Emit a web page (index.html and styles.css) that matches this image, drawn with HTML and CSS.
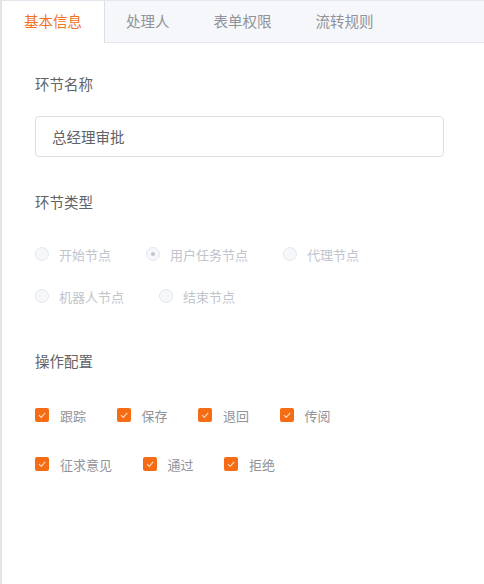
FILE: index.html
```html
<!DOCTYPE html>
<html lang="zh-CN">
<head>
    <meta charset="UTF-8">
    <title>环节配置</title>
    <link rel="stylesheet" href="styles.css">
</head>
<body>
    <div class="panel">
        <div class="tabs">
            <div class="tab active">基本信息</div>
            <div class="tab">处理人</div>
            <div class="tab">表单权限</div>
            <div class="tab">流转规则</div>
        </div>

        <div class="content">
            <div class="title">环节名称</div>
            <input class="text-input" type="text" value="总经理审批">

            <div class="title title-type">环节类型</div>
            <div class="radio-group">
                <label class="radio"><span class="radio-dot"></span>开始节点</label>
                <label class="radio"><span class="radio-dot checked"></span>用户任务节点</label>
                <label class="radio"><span class="radio-dot"></span>代理节点</label>
                <label class="radio"><span class="radio-dot"></span>机器人节点</label>
                <label class="radio"><span class="radio-dot"></span>结束节点</label>
            </div>

            <div class="title title-ops">操作配置</div>
            <div class="check-row">
                <label class="check"><span class="check-box"><svg viewBox="0 0 14 14"><polyline points="4,7.2 6.2,9.4 10.2,4.8"/></svg></span>跟踪</label>
                <label class="check"><span class="check-box"><svg viewBox="0 0 14 14"><polyline points="4,7.2 6.2,9.4 10.2,4.8"/></svg></span>保存</label>
                <label class="check"><span class="check-box"><svg viewBox="0 0 14 14"><polyline points="4,7.2 6.2,9.4 10.2,4.8"/></svg></span>退回</label>
                <label class="check"><span class="check-box"><svg viewBox="0 0 14 14"><polyline points="4,7.2 6.2,9.4 10.2,4.8"/></svg></span>传阅</label>
            </div>
            <div class="check-row second">
                <label class="check"><span class="check-box"><svg viewBox="0 0 14 14"><polyline points="4,7.2 6.2,9.4 10.2,4.8"/></svg></span>征求意见</label>
                <label class="check"><span class="check-box"><svg viewBox="0 0 14 14"><polyline points="4,7.2 6.2,9.4 10.2,4.8"/></svg></span>通过</label>
                <label class="check"><span class="check-box"><svg viewBox="0 0 14 14"><polyline points="4,7.2 6.2,9.4 10.2,4.8"/></svg></span>拒绝</label>
            </div>
        </div>
    </div>
</body>
</html>
```

FILE: styles.css
```css
body {
    margin: 0;
    padding: 0;
    background-color: #fff;
    font-family: "Microsoft YaHei", "Noto Sans CJK SC", sans-serif;
    color: #606266;
}

.panel {
    height: 584px;
    border-left: 2px solid #e4e4e4;
    box-sizing: border-box;
}

/* tab header */
.tabs {
    display: flex;
    height: 41px;
    background-color: #f5f7fa;
    border-top: 1px solid #e4e7ed;
    border-bottom: 1px solid #e4e7ed;
}

.tab {
    padding: 0 21.5px;
    line-height: 40px;
    font-size: 14.5px;
    color: #909399;
    border-right: 1px solid transparent;
}

.tab.active {
    background-color: #fff;
    color: #f0731f;
    border-right-color: #dcdfe6;
    margin-bottom: -1px;
    padding-left: 22px;
}

.content {
    padding: 31px 40px 0 33px;
}

.title {
    font-size: 14.5px;
    line-height: 20px;
    color: #606266;
}

.text-input {
    display: block;
    width: 409px;
    height: 41px;
    box-sizing: border-box;
    margin-top: 22px;
    padding: 0 16px;
    border: 1px solid #dcdfe6;
    border-radius: 4px;
    font-family: inherit;
    font-size: 14.5px;
    color: #606266;
    outline: none;
}

.title-type {
    margin-top: 35px;
}

.title-ops {
    margin-top: 45px;
}

/* radios (disabled) */
.radio-group {
    display: flex;
    flex-wrap: wrap;
    row-gap: 22px;
    margin-top: 32px;
}

.radio {
    display: flex;
    align-items: center;
    height: 20px;
    margin-right: 35px;
    font-size: 13px;
    color: #c0c4cc;
}

.radio-dot {
    width: 12px;
    height: 12px;
    margin-right: 10px;
    border: 1px solid #e4e7ed;
    border-radius: 50%;
    background-color: #f5f7fa;
    position: relative;
}

.radio-dot.checked::after {
    content: "";
    position: absolute;
    left: 4px;
    top: 4px;
    width: 4px;
    height: 4px;
    border-radius: 50%;
    background-color: #c0c4cc;
}

/* checkboxes */
.check-row {
    display: flex;
    margin-top: 34px;
}

.check-row.second {
    margin-top: 29px;
}

.check {
    display: flex;
    align-items: center;
    height: 20px;
    margin-right: 30.5px;
    font-size: 13px;
    color: #909399;
}

.check-box {
    width: 14px;
    height: 14px;
    margin-right: 11px;
    border-radius: 2px;
    background-color: #f56c14;
}

.check-box svg {
    display: block;
    width: 14px;
    height: 14px;
    fill: none;
    stroke: #ffd9b8;
    stroke-width: 1.2;
}
```
